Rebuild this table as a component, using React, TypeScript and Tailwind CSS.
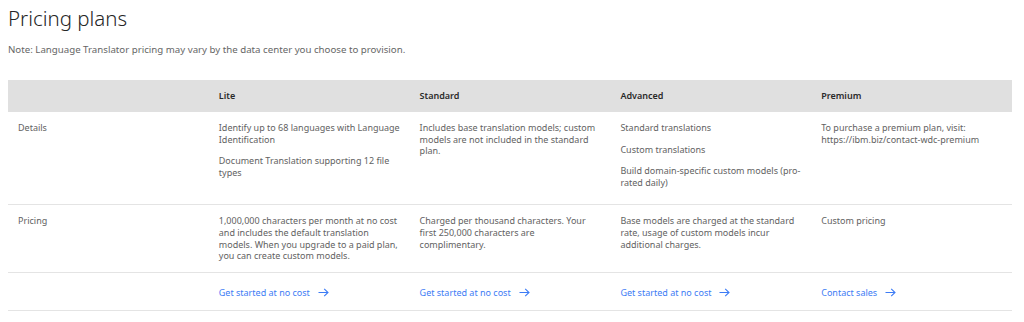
import React from "react";

const Arrow = () => (
  <svg width="11" height="9" viewBox="0 0 11 9" fill="none" className="ml-[8px] shrink-0">
    <path d="M0.5 4.5H10M6.2 0.8L10 4.5L6.2 8.2" stroke="currentColor" strokeWidth="1.1" />
  </svg>
);

const Link = ({ children }: { children: React.ReactNode }) => (
  <a className="flex items-center text-[#3d7cf5] no-underline" href="#">
    <span>{children}</span>
    <Arrow />
  </a>
);

const cols = ["", "Lite", "Standard", "Advanced", "Premium"];

const details: string[][][] = [
  [["Details"]],
  [
    ["Identify up to 68 languages with Language", "Identification"],
    ["Document Translation supporting 12 file", "types"],
  ],
  [["Includes base translation models; custom", "models are not included in the standard", "plan."]],
  [["Standard translations"], ["Custom translations"], ["Build domain-specific custom models (pro-", "rated daily)"]],
  [["To purchase a premium plan, visit:", "https://ibm.biz/contact-wdc-premium"]],
];

const pricing: string[][] = [
  ["Pricing"],
  [
    "1,000,000 characters per month at no cost",
    "and includes the default translation",
    "models. When you upgrade to a paid plan,",
    "you can create custom models.",
  ],
  ["Charged per thousand characters. Your", "first 250,000 characters are", "complimentary."],
  ["Base models are charged at the standard", "rate, usage of custom models incur", "additional charges."],
  ["Custom pricing"],
];

const links = ["", "Get started at no cost", "Get started at no cost", "Get started at no cost", "Contact sales"];

const Para = ({ lines }: { lines: string[] }) => (
  <p className="mb-[10px]">
    {lines.map((l, k) => (
      <span key={k} className="block whitespace-nowrap">
        {l}
      </span>
    ))}
  </p>
);

export default function App() {
  return (
    <div
      className="w-[1024px] h-[322px] bg-white px-[8px] overflow-hidden text-[#626262]"
      style={{ fontFamily: '"Noto Sans", "Open Sans", sans-serif' }}
    >
      <h1 className="text-[20.5px] leading-[26px] font-light text-[#262626] pt-[5px]">Pricing plans</h1>
      <p className="text-[9.7px] leading-[12px] mt-[13px] text-[#666]">
        Note: Language Translator pricing may vary by the data center you choose to provision.
      </p>
      <div className="mt-[24px] w-[1004px] text-[9px] leading-[11.6px]">
        <div className="grid grid-cols-5 h-[32px] bg-[#e0e0e0] items-center">
          {cols.map((c, i) => (
            <div key={i} className="px-[10px] font-semibold text-[#2a2a2a]">
              {c}
            </div>
          ))}
        </div>
        <div className="grid grid-cols-5 border-b border-[#e4e4e4] pt-[10px] pb-[6px]">
          {details.map((ps, i) => (
            <div key={i} className="px-[10px]">
              {ps.map((p, j) => (
                <Para key={j} lines={p} />
              ))}
            </div>
          ))}
        </div>
        <div className="grid grid-cols-5 border-b border-[#e4e4e4] pt-[10px] pb-[0px]">
          {pricing.map((p, i) => (
            <div key={i} className="px-[10px]">
              <Para lines={p} />
            </div>
          ))}
        </div>
        <div className="grid grid-cols-5 border-b border-[#e4e4e4] h-[38px] pt-[3px] items-center">
          {links.map((l, i) => (
            <div key={i} className="px-[10px]">
              {l && <Link>{l}</Link>}
            </div>
          ))}
        </div>
      </div>
    </div>
  );
}
